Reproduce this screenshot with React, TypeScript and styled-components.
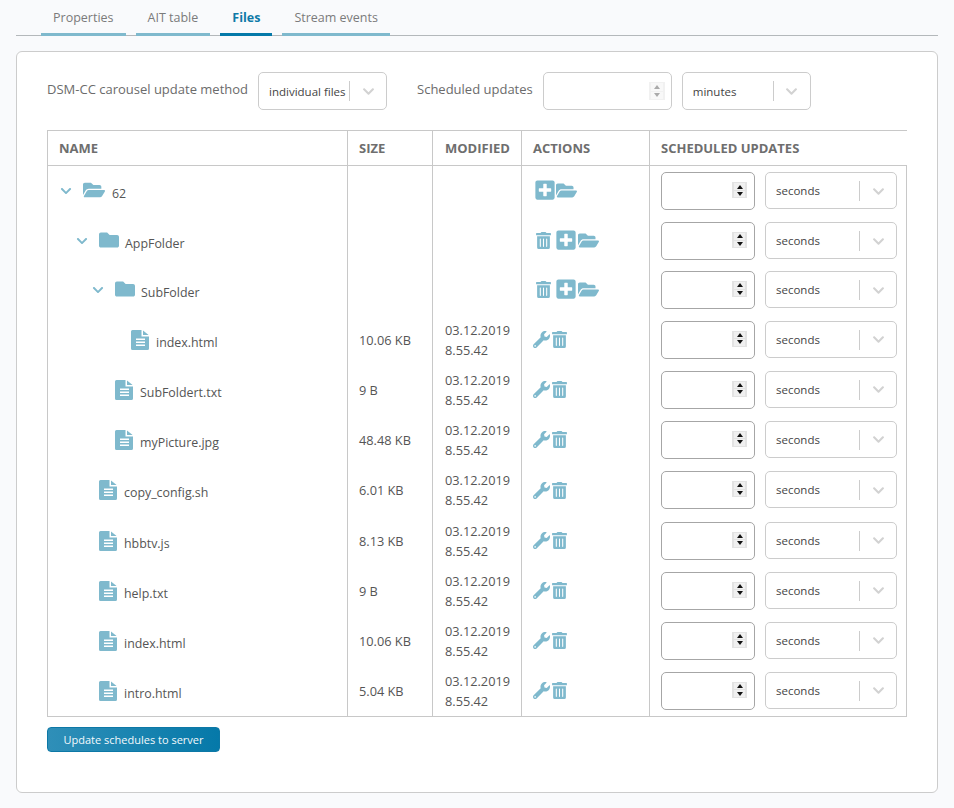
import React from "react";
import styled, { createGlobalStyle } from "styled-components";
import { FaFolder, FaFolderOpen, FaTrashAlt, FaWrench, FaPlusSquare, FaChevronDown } from "react-icons/fa";

const Global = createGlobalStyle`
  html, body { margin: 0; padding: 0; background: #f9fafc; }
  body { font-family: "Open Sans", "Liberation Sans", sans-serif; font-size: 13px; color: #555; }
  * { box-sizing: border-box; }
`;

const Page = styled.div`
  width: 954px;
  height: 808px;
  padding: 0 16px;
`;
const Tabs = styled.div`
  display: flex;
  gap: 10px;
  height: 36px;
  padding-left: 25px;
  border-bottom: 1px solid #b4b8bb;
`;
const Tab = styled.div<{ $active?: boolean }>`
  height: 36px;
  padding: 9px 12px 0;
  line-height: 18px;
  font-size: 12.5px;
  font-weight: ${(p) => (p.$active ? 700 : 400)};
  color: ${(p) => (p.$active ? "#0f7aa8" : "#7b7b7b")};
  border-bottom: 3px solid ${(p) => (p.$active ? "#0579a9" : "#7fb9cd")};
`;
const Panel = styled.div`
  margin-top: 15px;
  width: 922px;
  height: 742px;
  background: #fff;
  border: 1px solid #ccc;
  border-radius: 6px;
  padding: 20px 30px;
`;
const Controls = styled.div`
  display: flex;
  align-items: center;
  height: 38px;
  margin-bottom: 20px;
`;
const Label = styled.label<{ $gap: number }>`
  color: #6b6b6b;
  font-size: 13px;
  margin-right: ${(p) => p.$gap}px;
  position: relative;
  top: -2px;
`;
const SelectBox = styled.div<{ $w: number; $h: number }>`
  display: flex;
  align-items: center;
  width: ${(p) => p.$w}px;
  height: ${(p) => p.$h}px;
  border: 1px solid #ccc;
  border-radius: 5px;
  background: #fff;
  padding-left: 10px;
  padding-top: ${(p) => (p.$h < 38 ? 1 : 0)}px;
  flex: none;
  font-size: 11.5px;
  color: #444;
`;
const SelectValue = styled.span`
  flex: 1;
  white-space: nowrap;
  overflow: hidden;
`;
const SelectSep = styled.span`
  width: 1px;
  height: 20px;
  background: #ccc;
`;
const SelectArrow = styled.span`
  width: 36px;
  display: flex;
  justify-content: center;
  color: #d2d2d2;
  font-size: 13px;
`;
const SpinField = styled.div<{ $w: number }>`
  position: relative;
  width: ${(p) => p.$w}px;
  flex: none;
`;
const NumberInput = styled.input<{ $h: number; $soft?: boolean }>`
  display: block;
  width: 100%;
  height: ${(p) => p.$h}px;
  border: 1px solid ${(p) => (p.$soft ? "#ccc" : "#a6a6a6")};
  border-radius: 5px;
  background: #fff;
  outline: none;
  padding: 0 22px 0 6px;
  font-family: inherit;
  appearance: textfield;
  &::-webkit-inner-spin-button {
    display: none;
  }
`;
const Spinner = styled.div<{ $soft?: boolean }>`
  position: absolute;
  top: 10px;
  right: ${(p) => (p.$soft ? 7 : 8)}px;
  width: ${(p) => (p.$soft ? 16 : 15)}px;
  height: ${(p) => (p.$soft ? 18 : 16)}px;
  padding: 1px 2px;
  display: flex;
  flex-direction: column;
  gap: 1px;
  background: ${(p) => (p.$soft ? "#f1f1f1" : "#e3e3e3")};
`;
const SpinButton = styled.div<{ $soft?: boolean; $down?: boolean }>`
  flex: 1;
  display: flex;
  align-items: center;
  justify-content: center;
  background: ${(p) => (p.$soft ? "#f8f8f8" : "#f0f0f0")};
  &::before {
    content: "";
    width: 0;
    height: 0;
    border-left: 3.5px solid transparent;
    border-right: 3.5px solid transparent;
    ${(p) => (p.$down ? "border-top" : "border-bottom")}: 4px solid ${(p) => (p.$soft ? "#aaa" : "#111")};
  }
`;
const TopSpacer = styled.span<{ $w: number }>`
  width: ${(p) => p.$w}px;
  flex: none;
`;
const Table = styled.table`
  border-collapse: collapse;
  table-layout: fixed;
  width: 859px;
`;
const HeadCell = styled.th<{ $last?: boolean; $pad?: number }>`
  height: 35px;
  padding: 0 ${(p) => p.$pad ?? 11}px;
  text-align: left;
  font-size: 13px;
  font-weight: 700;
  color: #6e6e6e;
  border: 1px solid #c8c8c8;
  border-right: ${(p) => (p.$last ? "none" : "1px solid #c8c8c8")};
`;
const Row = styled.tr<{ $h: number; $last?: boolean }>`
  height: ${(p) => p.$h}px;
  border-bottom: ${(p) => (p.$last ? "1px solid #c8c8c8" : "none")};
`;
const Cell = styled.td<{ $pad?: number }>`
  padding: 0 ${(p) => p.$pad ?? 11}px;
  font-size: 12.75px;
  color: #555;
  vertical-align: middle;
  border-left: 1px solid #c8c8c8;
  border-right: 1px solid #c8c8c8;
  line-height: 20px;
`;
const NameWrap = styled.div<{ $level: number }>`
  display: flex;
  align-items: center;
  padding-left: ${(p) => p.$level * 16}px;
  font-size: 12.4px;
  color: #555;
`;
const Caret = styled.span`
  width: 12px;
  margin-left: 1px;
  margin-right: 11px;
  display: flex;
  color: #7fb9cd;
  font-size: 12px;
`;
const NodeIcon = styled.span<{ $size: number }>`
  display: flex;
  color: #7fb9cd;
  font-size: ${(p) => p.$size}px;
  position: relative;
  top: -1px;
`;
const DocIcon = styled.svg`
  display: block;
  width: 18px;
  height: 20px;
  flex: none;
  margin-left: 24px;
`;
const NodeText = styled.span<{ $gap: number }>`
  margin-left: ${(p) => p.$gap}px;
  position: relative;
  top: 3px;
`;
const Actions = styled.div<{ $indent: number; $top: number }>`
  display: flex;
  align-items: center;
  color: #7fb9cd;
  position: relative;
  top: ${(p) => p.$top}px;
  padding-left: ${(p) => p.$indent}px;
`;
const ActionGap = styled.span<{ $w: number }>`
  width: ${(p) => p.$w}px;
  flex: none;
`;
const ScheduleWrap = styled.div`
  display: flex;
  align-items: flex-start;
  gap: 10px;
`;
const SubmitButton = styled.button`
  display: block;
  margin-top: 10px;
  width: 173px;
  height: 25px;
  border: 1px solid #0d78a6;
  border-radius: 4px;
  background: linear-gradient(90deg, #2f8fb8, #0579a9);
  color: #f3f9fc;
  font-family: inherit;
  font-size: 11px;
  padding: 0;
`;

type Kind = "root" | "folder" | "file";
const rows: { name: string; level: number; kind: Kind; h: number; size?: string; time?: string }[] = [
  { name: "62", level: 0, kind: "root", h: 51 },
  { name: "AppFolder", level: 1, kind: "folder", h: 49 },
  { name: "SubFolder", level: 2, kind: "folder", h: 49 },
  { name: "index.html", level: 3, kind: "file", h: 50, size: "10.06 KB", time: "8.55.42" },
  { name: "SubFoldert.txt", level: 2, kind: "file", h: 50, size: "9 B", time: "8.55.42" },
  { name: "myPicture.jpg", level: 2, kind: "file", h: 50, size: "48.48 KB", time: "8.55.42" },
  { name: "copy_config.sh", level: 1, kind: "file", h: 51, size: "6.01 KB", time: "8.55.42" },
  { name: "hbbtv.js", level: 1, kind: "file", h: 50, size: "8.13 KB", time: "8.55.42" },
  { name: "help.txt", level: 1, kind: "file", h: 50, size: "9 B", time: "8.55.42" },
  { name: "index.html", level: 1, kind: "file", h: 50, size: "10.06 KB", time: "8.55.42" },
  { name: "intro.html", level: 1, kind: "file", h: 51, size: "5.04 KB", time: "8.55.42" },
];

const Select = ({ value, w, h }: { value: string; w: number; h: number }) => (
  <SelectBox $w={w} $h={h}>
    <SelectValue>{value}</SelectValue>
    <SelectSep />
    <SelectArrow>
      <FaChevronDown />
    </SelectArrow>
  </SelectBox>
);

const NumberField = ({ w, soft }: { w: number; soft?: boolean }) => (
  <SpinField $w={w}>
    <NumberInput type="number" $h={38} $soft={soft} disabled={soft} />
    <Spinner $soft={soft}>
      <SpinButton $soft={soft} />
      <SpinButton $soft={soft} $down />
    </Spinner>
  </SpinField>
);

const FileGlyph = () => (
  <DocIcon viewBox="0 0 18 20">
    <path
      fill="#7fb9cd"
      d="M1.5 0H10.5V6.5H18V18.5A1.5 1.5 0 0 1 16.5 20H1.5A1.5 1.5 0 0 1 0 18.5V1.5A1.5 1.5 0 0 1 1.5 0Z"
    />
    <path fill="#7fb9cd" d="M12 0.4L17.6 5H12Z" />
    <path fill="#fff" d="M5 8.5H14V10H5ZM5 11.5H14V13H5ZM5 14.5H14V16H5Z" />
  </DocIcon>
);

const Name = ({ r }: { r: (typeof rows)[number] }) => {
  if (r.kind === "file")
    return (
      <NameWrap $level={r.level}>
        <FileGlyph />
        <NodeText $gap={7}>{r.name}</NodeText>
      </NameWrap>
    );
  return (
    <NameWrap $level={r.level}>
      <Caret>
        <FaChevronDown />
      </Caret>
      <NodeIcon $size={r.kind === "root" ? 22 : 20}>{r.kind === "root" ? <FaFolderOpen /> : <FaFolder />}</NodeIcon>
      <NodeText $gap={r.kind === "root" ? 7 : 6}>{r.name}</NodeText>
    </NameWrap>
  );
};

const ActionIcons = ({ kind }: { kind: Kind }) => {
  if (kind === "root")
    return (
      <Actions $indent={1} $top={-1}>
        <FaPlusSquare size={22} />
        <FaFolderOpen size={21} />
      </Actions>
    );
  if (kind === "folder")
    return (
      <Actions $indent={2} $top={-1}>
        <FaTrashAlt size={17} />
        <ActionGap $w={3} />
        <FaPlusSquare size={22} />
        <ActionGap $w={1} />
        <FaFolderOpen size={21} />
      </Actions>
    );
  return (
    <Actions $indent={0} $top={0}>
      <FaWrench size={17} />
      <ActionGap $w={1} />
      <FaTrashAlt size={17} />
    </Actions>
  );
};

export default function App() {
  return (
    <Page>
      <Global />
      <Tabs>
        <Tab>Properties</Tab>
        <Tab>AIT table</Tab>
        <Tab $active>Files</Tab>
        <Tab>Stream events</Tab>
      </Tabs>
      <Panel>
        <Controls>
          <Label $gap={10}>DSM-CC carousel update method</Label>
          <Select value="individual files" w={129} h={38} />
          <TopSpacer $w={30} />
          <Label $gap={10}>Scheduled updates</Label>
          <NumberField w={129} soft />
          <TopSpacer $w={10} />
          <Select value="minutes" w={129} h={38} />
        </Controls>
        <Table>
          <colgroup>
            <col style={{ width: 300 }} />
            <col style={{ width: 85 }} />
            <col style={{ width: 89 }} />
            <col style={{ width: 128 }} />
            <col style={{ width: 257 }} />
          </colgroup>
          <thead>
            <tr>
              <HeadCell>NAME</HeadCell>
              <HeadCell>SIZE</HeadCell>
              <HeadCell $pad={12}>MODIFIED</HeadCell>
              <HeadCell>ACTIONS</HeadCell>
              <HeadCell $last>SCHEDULED UPDATES</HeadCell>
            </tr>
          </thead>
          <tbody>
            {rows.map((r, i) => (
              <Row key={i} $h={r.h} $last={i === rows.length - 1}>
                <Cell>
                  <Name r={r} />
                </Cell>
                <Cell>{r.size}</Cell>
                <Cell $pad={12}>
                  {r.time && (
                    <>
                      03.12.2019
                      <br />
                      {r.time}
                    </>
                  )}
                </Cell>
                <Cell>
                  <ActionIcons kind={r.kind} />
                </Cell>
                <Cell $pad={11}>
                  <ScheduleWrap>
                    <NumberField w={94} />
                    <Select value="seconds" w={132} h={37} />
                  </ScheduleWrap>
                </Cell>
              </Row>
            ))}
          </tbody>
        </Table>
        <SubmitButton>Update schedules to server</SubmitButton>
      </Panel>
    </Page>
  );
}
